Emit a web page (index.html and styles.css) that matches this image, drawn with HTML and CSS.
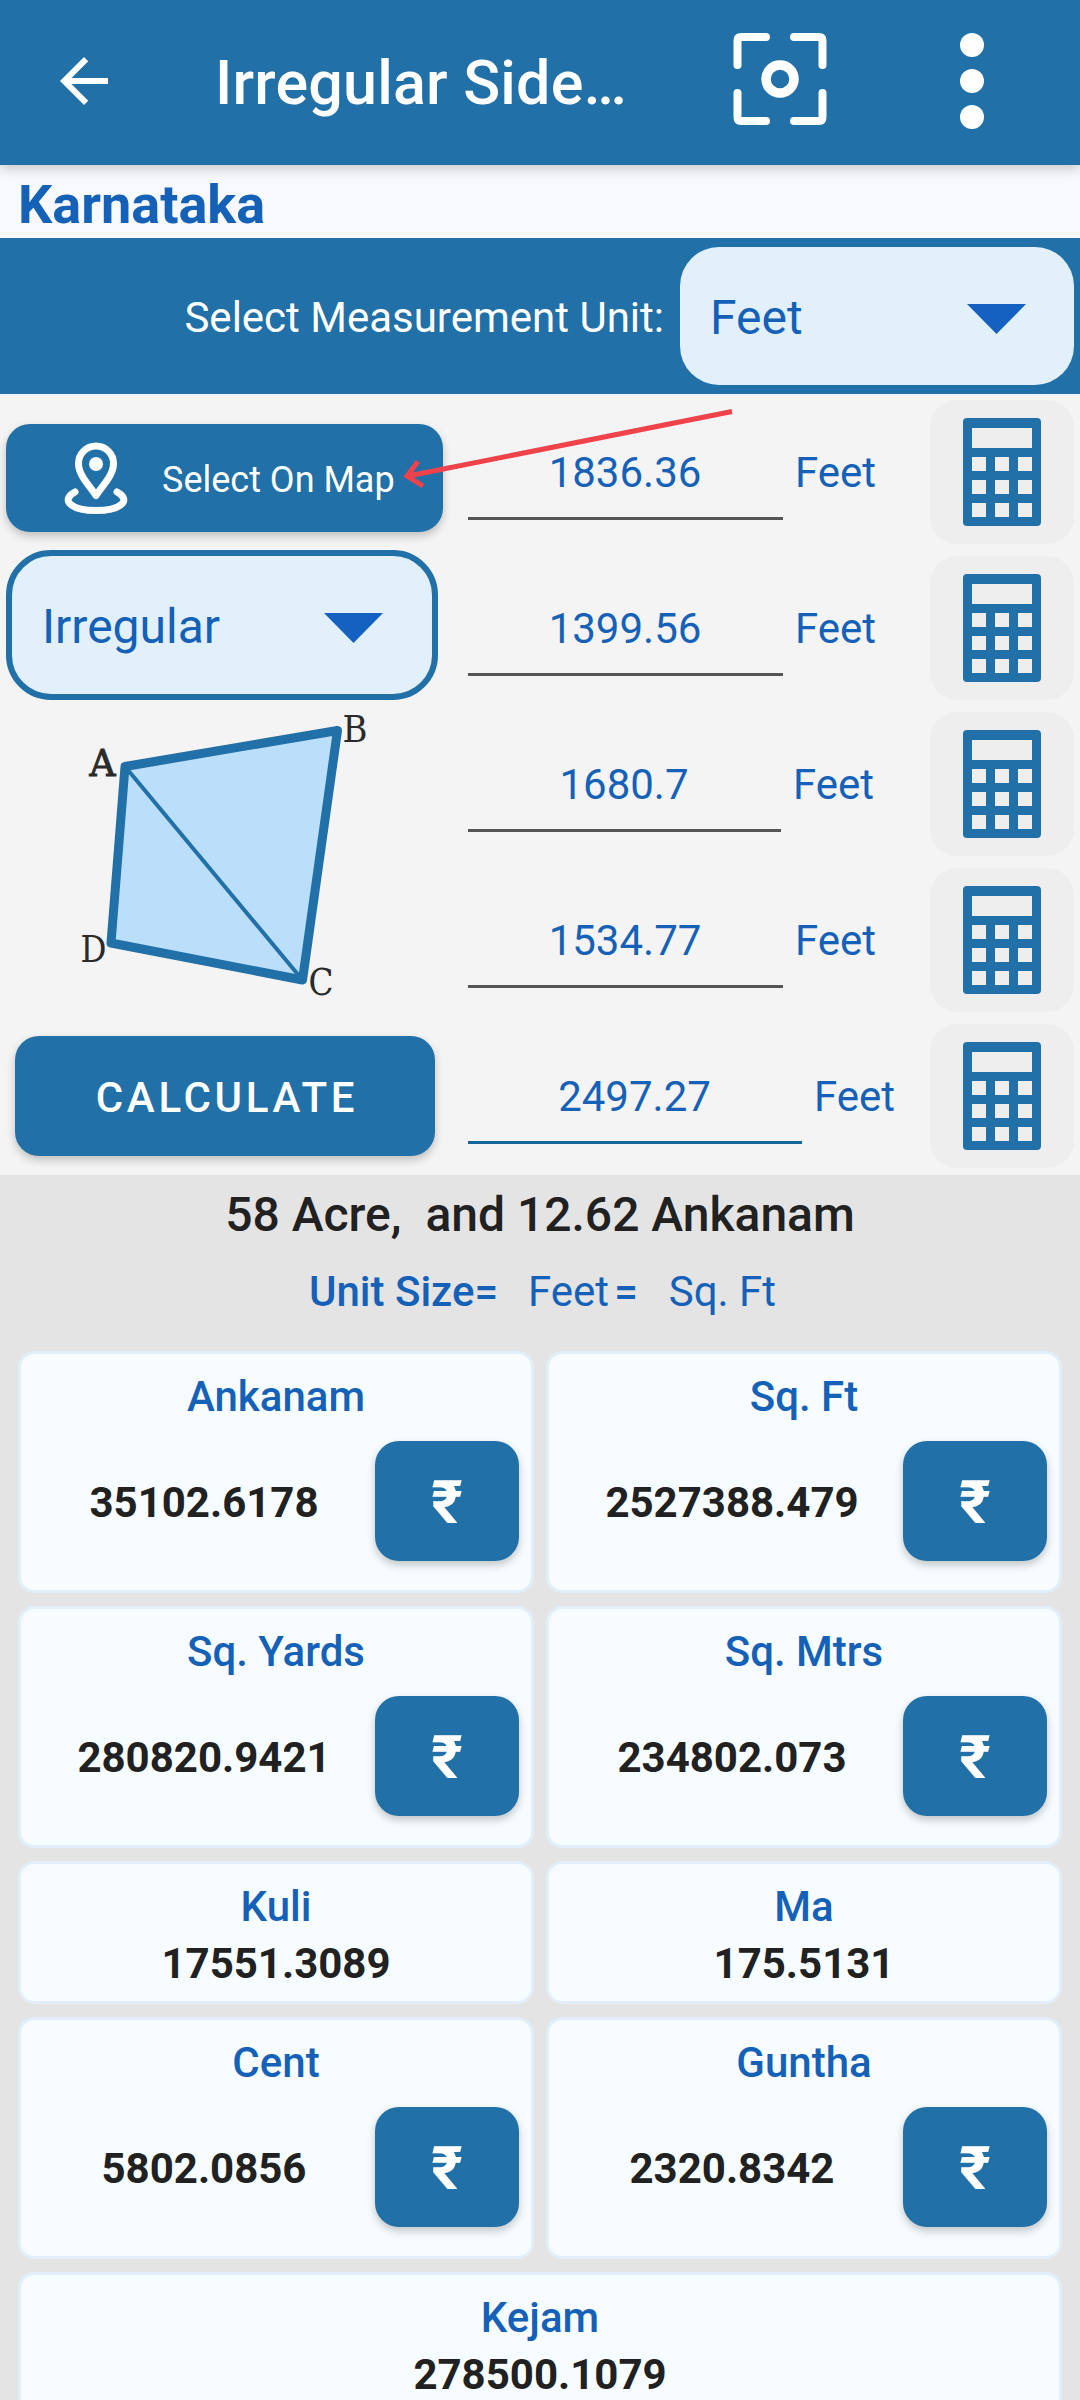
FILE: index.html
```html
<!DOCTYPE html>
<html lang="en">
<head>
<meta charset="utf-8">
<title>Irregular Side Land Area</title>
<link rel="stylesheet" href="styles.css">
</head>
<body>
<svg class="defs" aria-hidden="true">
  <symbol id="calc" viewBox="0 0 78 108">
    <path fill="#2170a7" fill-rule="evenodd" d="M4 0H74a4 4 0 0 1 4 4V104a4 4 0 0 1-4 4H4a4 4 0 0 1-4-4V4a4 4 0 0 1 4-4ZM9 10V30H69V10ZM9 39V53H23V39ZM32 39V53H46V39ZM55 39V53H69V39ZM9 62V76H23V62ZM32 62V76H46V62ZM55 62V76H69V62ZM9 85V99H23V85ZM32 85V99H46V85ZM55 85V99H69V85Z"/>
  </symbol>
</svg>

<header class="appbar">
  <svg class="back" viewBox="0 0 24 24"><path fill="#fff" d="M20 11H7.83l5.59-5.59L12 4l-8 8 8 8 1.41-1.41L7.83 13H20z"/></svg>
  <h1 class="title">Irregular Side…</h1>
  <svg class="focus" viewBox="0 0 94 94" fill="none" stroke="#fff" stroke-width="8" stroke-linecap="round" stroke-linejoin="round">
    <path d="M4.500 33V8.500Q4.500 5 8 5H33M61 5H86Q89.500 5 89.500 8.500V33M89.500 61V85Q89.500 89 86 89H61M33 89H8Q4.500 89 4.500 85V61"/>
    <circle cx="47" cy="47" r="14" stroke-width="9.500"/>
  </svg>
  <svg class="more" viewBox="0 0 24 96" fill="#fff"><circle cx="12" cy="12" r="12"/><circle cx="12" cy="48" r="12"/><circle cx="12" cy="84" r="12"/></svg>
</header>

<div class="region">Karnataka</div>

<section class="unitbar">
  <span class="unitbar-label">Select Measurement Unit:</span>
  <div class="select"><span>Feet</span><svg class="caret" viewBox="0 0 59 30"><path d="M0 0H59L29.500 30Z"/></svg></div>
</section>

<main class="panel">
  <div class="shape-col">
    <button class="btn map-btn">
      <svg class="pin" viewBox="0 0 64 72" fill="none" stroke="#fff" stroke-width="7" stroke-linejoin="round" stroke-linecap="round">
        <path d="M32 53.500C27 45 14.500 34 14.500 21.500A17.500 17.500 0 0 1 49.500 21.500C49.500 34 37 45 32 53.500Z"/>
        <circle cx="32" cy="22" r="7" fill="#fff" stroke="none"/>
        <path d="M11 50C-4 58 7 68.500 32 68.500S68 58 53 50"/>
      </svg>
      <span>Select On Map</span>
    </button>
    <div class="select outlined"><span>Irregular</span><svg class="caret" viewBox="0 0 59 30"><path d="M0 0H59L29.500 30Z"/></svg></div>
    <svg class="figure" viewBox="0 0 450 336">
      <path d="M125 66.500L337.500 30.500L302.500 280L111 243Z" fill="#bbdefa" stroke="#2170a7" stroke-width="9" stroke-linejoin="round"/>
      <path d="M125 66.500L302.500 280" stroke="#2170a7" stroke-width="4"/>
      <text class="vertex strong" x="89.500" y="75.500" textLength="26" lengthAdjust="spacingAndGlyphs">A</text>
      <text class="vertex" x="342.500" y="42" textLength="25" lengthAdjust="spacingAndGlyphs">B</text>
      <text class="vertex" x="308.500" y="295" textLength="25" lengthAdjust="spacingAndGlyphs">C</text>
      <text class="vertex" x="80.500" y="262" textLength="26" lengthAdjust="spacingAndGlyphs">D</text>
    </svg>
    <button class="btn calc-btn">CALCULATE</button>
  </div>

  <div class="sides">
    <div class="side"><div class="field">1836.36</div><span class="unit">Feet</span><div class="pad"><svg><use href="#calc"/></svg></div></div>
    <div class="side"><div class="field">1399.56</div><span class="unit">Feet</span><div class="pad"><svg><use href="#calc"/></svg></div></div>
    <div class="side"><div class="field narrow">1680.7</div><span class="unit">Feet</span><div class="pad"><svg><use href="#calc"/></svg></div></div>
    <div class="side"><div class="field">1534.77</div><span class="unit">Feet</span><div class="pad"><svg><use href="#calc"/></svg></div></div>
    <div class="side"><div class="field active">2497.27</div><span class="unit">Feet</span><div class="pad"><svg><use href="#calc"/></svg></div></div>
  </div>

  <svg class="pointer" viewBox="0 0 340 90" fill="none" stroke="#ef424b" stroke-width="5">
    <path d="M332 17.500L8 82M18 67.500L7 82L23 92"/>
  </svg>
</main>

<section class="results">
  <p class="summary">58 Acre,&nbsp; and 12.62 Ankanam</p>
  <p class="unit-size"><b>Unit Size=</b><span class="from">Feet</span><b class="eq">=</b><span class="to">Sq. Ft</span></p>
  <div class="cards">
    <div class="card"><h2>Ankanam</h2><div class="row"><strong>35102.6178</strong><button class="btn rupee">₹</button></div></div>
    <div class="card"><h2>Sq. Ft</h2><div class="row"><strong>2527388.479</strong><button class="btn rupee">₹</button></div></div>
    <div class="card"><h2>Sq. Yards</h2><div class="row"><strong>280820.9421</strong><button class="btn rupee">₹</button></div></div>
    <div class="card"><h2>Sq. Mtrs</h2><div class="row"><strong>234802.073</strong><button class="btn rupee">₹</button></div></div>
    <div class="card short"><h2>Kuli</h2><strong>17551.3089</strong></div>
    <div class="card short"><h2>Ma</h2><strong>175.5131</strong></div>
    <div class="card"><h2>Cent</h2><div class="row"><strong>5802.0856</strong><button class="btn rupee">₹</button></div></div>
    <div class="card"><h2>Guntha</h2><div class="row"><strong>2320.8342</strong><button class="btn rupee">₹</button></div></div>
    <div class="card short wide"><h2>Kejam</h2><strong>278500.1079</strong></div>
  </div>
</section>
</body>
</html>
```
FILE: styles.css
```css
* { box-sizing: border-box; margin: 0; }
html, body { height: 2400px; overflow: hidden; }
body {
  width: 1080px;
  font-family: Roboto, "Liberation Sans", sans-serif;
  font-size: 42px;
  line-height: 49px;
  color: #1561b8;
  background: #e4e4e4;
}
svg { display: block; flex: none; }
.defs { position: absolute; width: 0; height: 0; }

.appbar {
  position: relative;
  height: 165px;
  display: flex;
  background: #2170a7;
  box-shadow: 0 3px 12px rgba(0, 0, 0, .22);
}
.back { width: 72px; height: 72px; margin: 45px 0 0 48px; }
.title {
  width: 440px;
  margin: 48px 0 0 95px;
  font-size: 61px;
  line-height: 70px;
  font-weight: 500;
  letter-spacing: .2px;
  white-space: nowrap;
  color: #fff;
}
.focus { width: 94px; height: 94px; margin: 32px 0 0 78px; }
.more { width: 24px; height: 96px; margin: 33px 0 0 133px; }

.region {
  height: 73px;
  padding: 8px 18px 0;
  font-size: 54px;
  line-height: 63px;
  font-weight: 700;
  color: #1561b8;
  background: #f8f9fe;
}

.unitbar {
  height: 156px;
  display: flex;
  align-items: center;
  justify-content: flex-end;
  gap: 16px;
  padding-right: 6px;
  background: #2170a7;
}
.unitbar-label { padding-top: 2px; color: #fff; white-space: nowrap; }
.select {
  width: 394px;
  height: 138px;
  display: flex;
  align-items: center;
  justify-content: space-between;
  padding: 0 48px 0 30px;
  border-radius: 39px;
  font-size: 48px;
  line-height: 56px;
  background: #e1f0fb;
}
.select span { padding-top: 4px; }
.caret { width: 59px; height: 30px; margin-top: 5px; fill: #1561c1; }

.panel { position: relative; height: 781px; display: flex; background: #f4f4f4; }
.shape-col { width: 450px; padding-top: 30px; }
.btn {
  display: flex;
  align-items: center;
  justify-content: center;
  padding: 0;
  border: 0;
  border-radius: 24px;
  font-family: inherit;
  color: #fff;
  background: #2170a7;
  box-shadow: 0 4px 8px rgba(0, 0, 0, .22);
}
.map-btn {
  width: 437px;
  height: 108px;
  margin-left: 6px;
  padding: 3px 0 0 58px;
  justify-content: flex-start;
  gap: 34px;
  font-size: 36px;
}
.pin { width: 64px; height: 72px; margin-top: -3px; }
.outlined {
  width: 432px;
  height: 150px;
  margin: 18px 0 0 6px;
  padding: 0 49px 0 30px;
  border: 6px solid #2170a7;
  border-radius: 45px;
}
.figure { width: 450px; height: 336px; }
.vertex { font-family: "DejaVu Serif", serif; font-size: 37px; fill: #2a2a2a; }
.strong { stroke: #2a2a2a; stroke-width: 1px; }
.calc-btn {
  width: 420px;
  height: 120px;
  margin-left: 15px;
  padding: 2px 0 0 4px;
  font-size: 42px;
  font-weight: 500;
  letter-spacing: 3.7px;
}

.sides { flex: 1; }
.side { height: 156px; display: flex; align-items: flex-start; padding: 6px 6px 0 18px; }
.field {
  width: 315px;
  height: 120px;
  padding: 48px 1px 0 0;
  text-align: center;
  border-bottom: 3px solid #555;
}
.narrow { width: 313px; }
.active { width: 334px; border-color: #15679b; }
.unit { margin: 48px 0 0 12px; }
.pad {
  width: 144px;
  height: 144px;
  margin-left: auto;
  display: grid;
  place-items: center;
  border-radius: 27px;
  background: #eee;
}
.pad svg { width: 78px; height: 108px; }
.pointer { position: absolute; left: 400px; top: 0; width: 340px; height: 90px; overflow: visible; }

.results { text-align: center; }
.summary { padding-top: 12px; font-size: 48px; line-height: 56px; font-weight: 500; color: #212121; }
.unit-size { display: flex; padding: 24px 0 0 309px; white-space: nowrap; }
.unit-size b { font-weight: 500; }
.from { margin-left: 30px; }
.eq { margin-left: 5px; }
.to { margin-left: 31px; }

.cards {
  display: grid;
  grid-template-columns: 516px 516px;
  gap: 13px 12px;
  padding: 35px 18px 0;
}
.card {
  height: 242px;
  padding: 18px 12px 0;
  border: 3px solid #e2eef9;
  border-radius: 16px;
  background: #f6fcff;
}
.card h2 { font-size: 42px; line-height: 49px; font-weight: 500; }
.card strong { display: block; font-weight: 700; color: #212121; }
.short { height: 143px; }
.short strong { margin-top: 8px; }
.wide { grid-column: span 2; }
.row { display: flex; align-items: center; height: 120px; margin-top: 20px; }
.row strong { flex: 1; padding-top: 2px; }
.rupee { width: 144px; height: 120px; padding-top: 2px; font-size: 60px; font-weight: 700; }
```
